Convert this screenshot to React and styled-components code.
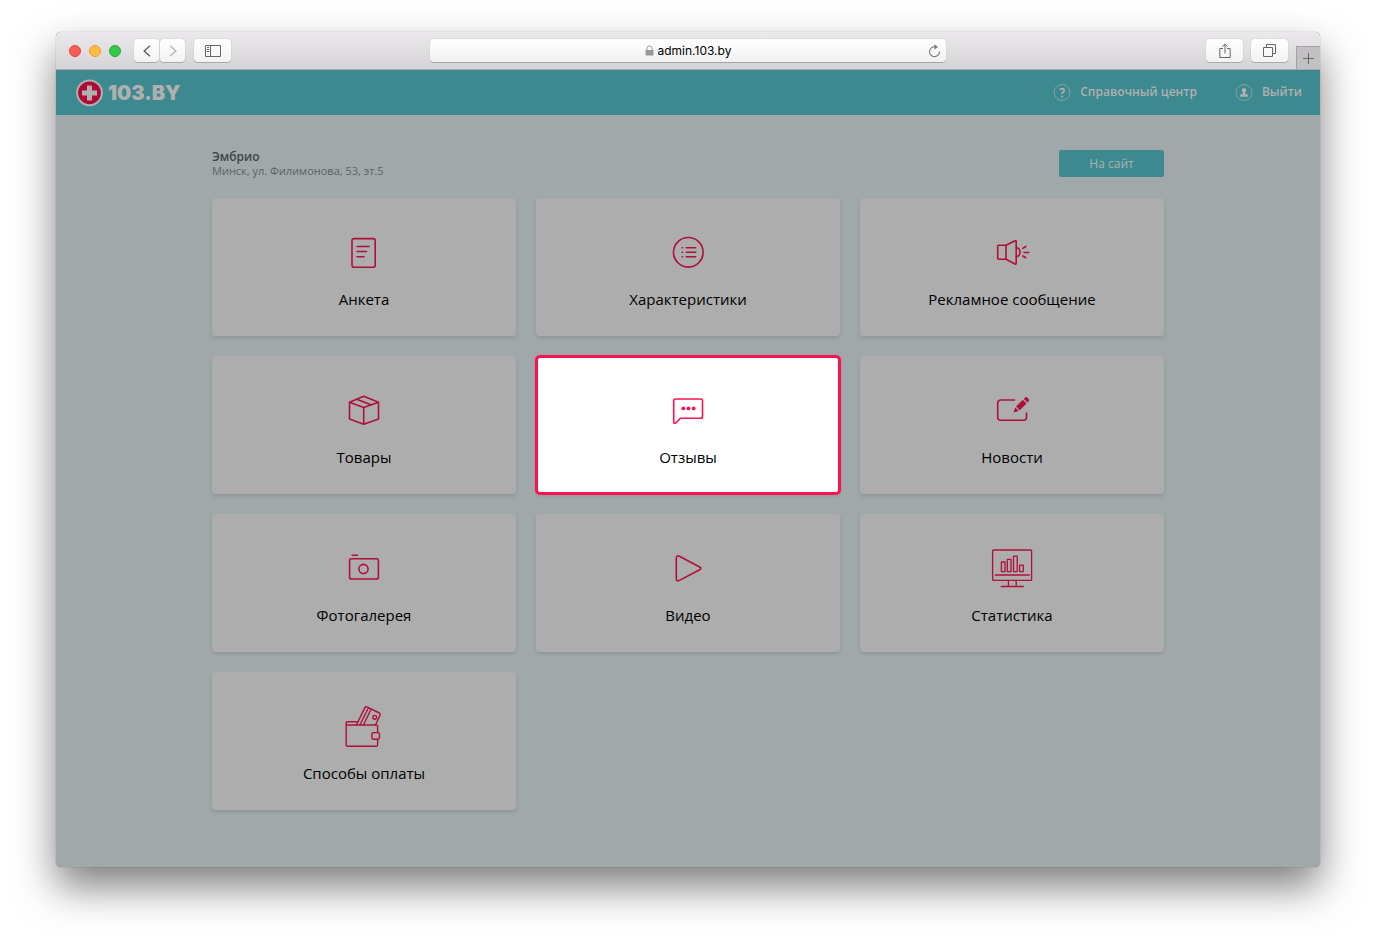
import React from 'react';
import styled, { createGlobalStyle, ThemeProvider } from 'styled-components';

const theme = {
  colors: {
    primary: '#3c8a90',
    accent: '#b00f3b',
    highlight: '#fa114f',
    page: '#a1a8aa',
    card: '#adadad',
    light: '#b0b0b0',
    text: '#000000',
    textSecondary: '#5d6365',
  },
};

const GlobalStyle = createGlobalStyle`
  * {
    box-sizing: border-box;
  }

  body {
    margin: 0;
    background: #ffffff;
    font-family: 'Open Sans', 'Noto Sans', sans-serif;
  }

  button, input {
    font-family: inherit;
  }
`;

const Desktop = styled.div`
  display: flex;
  min-height: 100vh;
  padding: 32px 56px 80px;
`;

const Window = styled.div`
  flex: 1;
  display: flex;
  flex-direction: column;
  min-width: 0;
  border-radius: 5px;
  overflow: hidden;
  background: ${({ theme }) => theme.colors.page};
  box-shadow: 0 0 1px rgba(0, 0, 0, 0.5), 0 20px 40px rgba(0, 0, 0, 0.5);
`;

const Toolbar = styled.div`
  display: grid;
  grid-template-columns: 1fr minmax(0, 516px) 1fr;
  align-items: center;
  height: 38px;
  background: linear-gradient(#ebe9eb, #d5d3d5);
  border-bottom: 1px solid #a9a5a8;
`;

const ToolGroup = styled.div`
  display: flex;
  align-items: center;
  align-self: stretch;
  justify-content: ${({ $end }) => ($end ? 'flex-end' : 'flex-start')};
  gap: 8px;
  padding-left: 13px;
`;

const Lights = styled.div`
  display: flex;
  gap: 8px;
  margin-right: 5px;
`;

const Light = styled.span`
  width: 12px;
  height: 12px;
  border-radius: 50%;
  background: ${({ $fill }) => $fill};
  border: 1px solid ${({ $edge }) => $edge};
`;

const NavButtons = styled.div`
  display: flex;
  gap: 1px;
  margin-right: 1px;
`;

const ToolButton = styled.button`
  display: flex;
  align-items: center;
  justify-content: center;
  width: ${({ $narrow }) => ($narrow ? '25px' : '37px')};
  height: 23px;
  padding: 0;
  border: 0;
  border-radius: 4px;
  background: linear-gradient(#ffffff, #f3f2f3);
  box-shadow: 0 0 1px rgba(0, 0, 0, 0.35), 0 1px 0 rgba(0, 0, 0, 0.18);
  color: ${({ disabled }) => (disabled ? '#b9b9b9' : '#666666')};
`;

const NewTab = styled.button`
  display: flex;
  align-items: center;
  justify-content: center;
  align-self: flex-end;
  width: 24px;
  height: 23px;
  padding: 0;
  border: 1px solid #a5a2a5;
  border-width: 1px 0 0 1px;
  background: #c2c0c2;
  color: #666666;
`;

const AddressBar = styled.div`
  display: flex;
  align-items: center;
  height: 23px;
  padding: 0 5px 0 24px;
  border-radius: 4px;
  background: linear-gradient(#ffffff, #f1f1f1);
  box-shadow: 0 0 1px rgba(0, 0, 0, 0.35), 0 1px 0 rgba(0, 0, 0, 0.2);
`;

const AddressLabel = styled.label`
  flex: 1;
  display: flex;
  align-items: center;
  justify-content: center;
  gap: 4px;
`;

const AddressInput = styled.input`
  width: 80px;
  height: 20px;
  padding: 0;
  border: 0;
  background: transparent;
  font-family: Inter, sans-serif;
  font-size: 12px;
  color: #000000;
`;

const ReloadButton = styled.button`
  display: flex;
  padding: 0;
  border: 0;
  background: none;
  color: #777777;
`;

const Header = styled.header`
  display: flex;
  align-items: center;
  justify-content: space-between;
  height: 45px;
  padding: 0 18px 0 20px;
  background: ${({ theme }) => theme.colors.primary};
`;

const Logo = styled.a`
  display: flex;
  align-items: center;
  gap: 4px;
  color: ${({ theme }) => theme.colors.light};
  font-family: Inter, sans-serif;
  font-size: 20px;
  font-weight: 900;
  text-decoration: none;
`;

const HeaderLinks = styled.nav`
  display: flex;
  gap: 38px;
`;

const HeaderLink = styled.a`
  display: flex;
  align-items: center;
  gap: 9px;
  padding-bottom: 1px;
  color: ${({ theme }) => theme.colors.light};
  font-size: 12px;
  font-weight: 600;
  line-height: 16px;
  text-decoration: none;
`;

const Content = styled.main`
  width: 100%;
  max-width: 952px;
  margin: 0 auto;
  padding: 35px 0 57px;
`;

const Company = styled.section`
  display: flex;
  align-items: flex-start;
  justify-content: space-between;
  margin-bottom: 20px;
`;

const CompanyName = styled.h1`
  margin: 0;
  color: #3f4446;
  font-size: 12px;
  font-weight: 600;
  line-height: 14px;
`;

const CompanyAddress = styled.p`
  margin: 0;
  color: ${({ theme }) => theme.colors.textSecondary};
  font-size: 11px;
  line-height: 14px;
`;

const SiteButton = styled.button`
  width: 105px;
  height: 27px;
  padding: 0;
  border: 0;
  border-radius: 2px;
  background: ${({ theme }) => theme.colors.primary};
  color: ${({ theme }) => theme.colors.light};
  font-size: 12px;
`;

const Cards = styled.nav`
  display: grid;
  grid-template-columns: repeat(3, 1fr);
  gap: 20px;
`;

const Card = styled.a`
  display: flex;
  flex-direction: column;
  align-items: center;
  gap: 15px;
  height: 138px;
  padding-top: 32px;
  border-radius: 4px;
  background: ${({ theme, $active }) => ($active ? '#ffffff' : theme.colors.card)};
  box-shadow: 0 2px 4px rgba(0, 0, 0, 0.12);
  outline: ${({ theme, $active }) => ($active ? `3px solid ${theme.colors.highlight}` : 'none')};
  outline-offset: -2px;
  color: ${({ theme }) => theme.colors.text};
  font-size: 15px;
  line-height: 20px;
  text-decoration: none;

  svg {
    color: ${({ theme, $active }) => ($active ? theme.colors.highlight : theme.colors.accent)};
  }
`;

// Every card icon is drawn around the centre of a 44px square
const CardIcon = ({ children }) => (
  <svg
    width="44"
    height="44"
    viewBox="-22 -22 44 44"
    fill="none"
    stroke="currentColor"
    strokeWidth="1.6"
    strokeLinecap="round"
    strokeLinejoin="round"
    aria-hidden="true"
  >
    {children}
  </svg>
);

const cards = [
  {
    title: 'Анкета',
    icon: (
      <>
        <rect x="-12" y="-13.4" width="23.2" height="28.6" rx="2" />
        <path d="M-7 -5.5H5M-7 -.5H2.5M-7 4.7H0" />
      </>
    ),
  },
  {
    title: 'Характеристики',
    icon: (
      <>
        <circle cx=".3" cy=".3" r="14.8" />
        <path d="M-1.7 -4.3H7.7M-1.7 .3H7.7M-1.7 4.7H7.7M-5.7 -4.3H-5.4M-5.7 .3H-5.4M-5.7 4.7H-5.4" />
      </>
    ),
  },
  {
    title: 'Рекламное сообщение',
    icon: (
      <>
        <path d="M-6 -6.7H-13.3Q-14.3 -6.7 -14.3 -5.7V6.3Q-14.3 7.3 -13.3 7.3H-6Z" />
        <path d="M-6 -6.7L3 -11.3Q4.2 -11.8 4.2 -10.6V11.3Q4.2 12.5 3 12L-6 7.3" />
        <path d="M4.2 -4.5C9.3 -3.5 9.3 3.8 4.2 4.8M10.8 -3.6L13.8 -5.5M12 .5H16.7M10.8 4L13.8 5.7" />
      </>
    ),
  },
  {
    title: 'Товары',
    icon: (
      <path d="M-.3 -13.7L-14.5 -7.8V9L-.3 14.2L14.5 9V-7.8ZM-14.5 -7.8L-.3 -2.5L14.5 -7.8M-.3 -2.5V14.2M-7.5 -10.7L7.2 -5.2M-4.5 -11.9L-7.5 -10.7" />
    ),
  },
  {
    title: 'Отзывы',
    active: true,
    icon: (
      <>
        <path d="M-12.5 -11H12.7Q14.5 -11 14.5 -9.2V6.5Q14.5 8.3 12.7 8.3H-7.5L-12 12.8Q-14.3 14 -14.3 12V-9.2Q-14.3 -11 -12.5 -11Z" />
        <g fill="currentColor" stroke="none">
          <circle cx="-4.7" cy="-1.6" r="1.9" />
          <circle cx=".5" cy="-1.6" r="1.9" />
          <circle cx="5.7" cy="-1.6" r="1.9" />
        </g>
      </>
    ),
  },
  {
    title: 'Новости',
    icon: (
      <>
        <path d="M2.5 -10H-11Q-14.3 -10 -14.3 -7V7.3Q-14.3 10.3 -11 10.3H11.5Q14.5 10.3 14.5 7.3V3" />
        <g fill="currentColor" stroke="none">
          <path d="M4 -3.6L10.8 -10.2L14.6 -6.6L7.7 .2Z" />
          <path d="M3.2 -2.6L6.8 1L1.6 2.4Z" />
          <path d="M11.7 -11L13.5 -12.8Q14.2 -13.3 14.9 -12.7L17 -10.6Q17.6 -9.9 17 -9.2L15.4 -7.5Z" />
        </g>
      </>
    ),
  },
  {
    title: 'Фотогалерея',
    icon: (
      <>
        <rect x="-14.4" y="-9.2" width="28.8" height="20.2" rx="1.8" />
        <circle cx="-.5" cy="1" r="4.6" />
        <path d="M-11.7 -12.7H-6.6" />
      </>
    ),
  },
  {
    title: 'Видео',
    icon: (
      <path d="M-11.7 -9.8Q-11.7 -13 -8.6 -11.8L11.7 -1Q13.8 .4 11.7 1.7L-8.6 12.4Q-11.7 13.6 -11.7 10.4Z" />
    ),
  },
  {
    title: 'Статистика',
    icon: (
      <g strokeWidth="1.3">
        <rect x="-19.4" y="-18" width="39" height="30.4" rx="1" />
        <path d="M-16.7 7H17.4M-3.6 12.4V18.3M4.2 12.4V18.3M-10.7 18.5H11.4" />
        <path d="M-10.6 3.6V-6H-7V3.6ZM-4.7 3.6V-8.6H-1V3.6ZM1.5 3.6V-11.9H5.2V3.6ZM7.6 3.6V-2.8H11.3V3.6Z" />
      </g>
    ),
  },
  {
    title: 'Способы оплаты',
    icon: (
      <g strokeWidth="1.4">
        <path d="M13.6 6.6V-.2Q13.6 -1 12.8 -1H-17.8V19Q-17.8 20.3 -16.5 20.3H12.3Q13.6 20.3 13.6 19V13.2" />
        <path d="M-17.8 -1V-3.2Q-17.8 -4.3 -16.7 -4.3H-6.5" />
        <path d="M-7.5 -1.3L.9 -18.4Q1.6 -19.6 2.8 -19.1L15.4 -13Q16.7 -12.3 16.1 -11L11.6 -1.3M-4 -1.3L4.4 -18.2M-.5 -1.3L7.1 -16.8" />
        <circle cx="10.7" cy="-8.7" r="1.9" />
        <rect x="7.9" y="6.6" width="7.6" height="6.6" rx="1.4" />
      </g>
    ),
  },
];

const BrowserToolbar = () => (
  <Toolbar>
    <ToolGroup>
      <Lights>
        <Light $fill="#fc5b57" $edge="#e2443f" />
        <Light $fill="#fdbc40" $edge="#e0a033" />
        <Light $fill="#34c84a" $edge="#27aa35" />
      </Lights>
      <NavButtons>
        <ToolButton $narrow aria-label="Назад">
          <svg width="8" height="12" fill="none" stroke="currentColor" strokeWidth="1.5">
            <path d="M7 .7L1.2 6L7 11.3" />
          </svg>
        </ToolButton>
        <ToolButton $narrow disabled aria-label="Вперёд">
          <svg width="8" height="12" fill="none" stroke="currentColor" strokeWidth="1.5">
            <path d="M1 .7L6.8 6L1 11.3" />
          </svg>
        </ToolButton>
      </NavButtons>
      <ToolButton aria-label="Боковая панель">
        <svg width="16" height="12" fill="none" stroke="currentColor">
          <path d="M.5 .5H15.5V11.5H.5ZM5.5 .5V11.5M2 2.5H4M2 4.5H4M2 6.5H4" />
        </svg>
      </ToolButton>
    </ToolGroup>

    <AddressBar>
      <AddressLabel>
        <svg width="9" height="11" fill="#999999" aria-hidden="true">
          <rect x=".5" y="5" width="8" height="5.5" rx=".6" />
          <path d="M2 5.5V3.3Q2 1 4.5 1Q7 1 7 3.3V5.5" fill="none" stroke="#999999" />
        </svg>
        <AddressInput type="text" aria-label="Адрес" defaultValue="admin.103.by" />
      </AddressLabel>
      <ReloadButton aria-label="Обновить">
        <svg width="13" height="14" fill="none" stroke="currentColor" strokeWidth="1.1">
          <path d="M7.5 2.8A5 5 0 1 0 11.5 7.5" />
          <path d="M6.3 .2L10 2.9L6.3 5.6Z" fill="currentColor" stroke="none" />
        </svg>
      </ReloadButton>
    </AddressBar>

    <ToolGroup $end>
      <ToolButton aria-label="Поделиться">
        <svg width="12" height="16" fill="none" stroke="currentColor">
          <path d="M4 5.5H.8V14.5H11.2V5.5H8M6 10.5V1M3.3 3.7L6 1L8.7 3.7" />
        </svg>
      </ToolButton>
      <ToolButton aria-label="Вкладки">
        <svg width="13" height="13" fill="none" stroke="currentColor">
          <path d="M.5 3.5H9.5V12.5H.5ZM3.5 3.5V.5H12.5V9.5H9.5" />
        </svg>
      </ToolButton>
      <NewTab aria-label="Новая вкладка">
        <svg width="11" height="11" stroke="currentColor">
          <path d="M0 5.5H11M5.5 0V11" />
        </svg>
      </NewTab>
    </ToolGroup>
  </Toolbar>
);

export default function App() {
  return (
    <ThemeProvider theme={theme}>
      <GlobalStyle />
      <Desktop>
        <Window>
          <BrowserToolbar />

          <Header>
            <Logo href="#">
              <svg width="28" height="28" viewBox="0 0 28 28" aria-hidden="true">
                <circle cx="13.5" cy="13.8" r="12.4" fill="#b00a36" stroke="#b0b0b0" strokeWidth="2" />
                <path d="M11 6.5H16V11.5H21V16.5H16V21.5H11V16.5H6V11.5H11Z" fill="#b0b0b0" />
              </svg>
              103.BY
            </Logo>
            <HeaderLinks>
              <HeaderLink href="#help">
                <svg width="18" height="18" fill="none" stroke="currentColor" aria-hidden="true">
                  <circle cx="9" cy="9.5" r="8" opacity=".6" />
                  <path d="M6.7 6.9Q7.6 5.6 9 5.6Q11.2 5.6 11.2 7.5Q11.2 8.6 10 9.3Q9 9.9 9 11.1" strokeWidth="1.6" />
                  <circle cx="9" cy="13.4" r="1" fill="currentColor" stroke="none" />
                </svg>
                Справочный центр
              </HeaderLink>
              <HeaderLink href="#logout">
                <svg width="18" height="18" aria-hidden="true">
                  <circle cx="9" cy="9.5" r="8" fill="none" stroke="currentColor" opacity=".6" />
                  <path
                    d="M9 4.9C10.6 4.9 11.4 6 11.2 7.5Q11 9.1 10 9.8V10.5Q13 11 13 12.7V13.7H5V12.7Q5 11 8 10.5V9.8Q7 9.1 6.8 7.5C6.6 6 7.4 4.9 9 4.9Z"
                    fill="currentColor"
                  />
                </svg>
                Выйти
              </HeaderLink>
            </HeaderLinks>
          </Header>

          <Content>
            <Company>
              <div>
                <CompanyName>Эмбрио</CompanyName>
                <CompanyAddress>Минск, ул. Филимонова, 53, эт.5</CompanyAddress>
              </div>
              <SiteButton>На сайт</SiteButton>
            </Company>

            <Cards>
              {cards.map(({ title, icon, active }) => (
                <Card key={title} href="#" $active={active}>
                  <CardIcon>{icon}</CardIcon>
                  {title}
                </Card>
              ))}
            </Cards>
          </Content>
        </Window>
      </Desktop>
    </ThemeProvider>
  );
}
